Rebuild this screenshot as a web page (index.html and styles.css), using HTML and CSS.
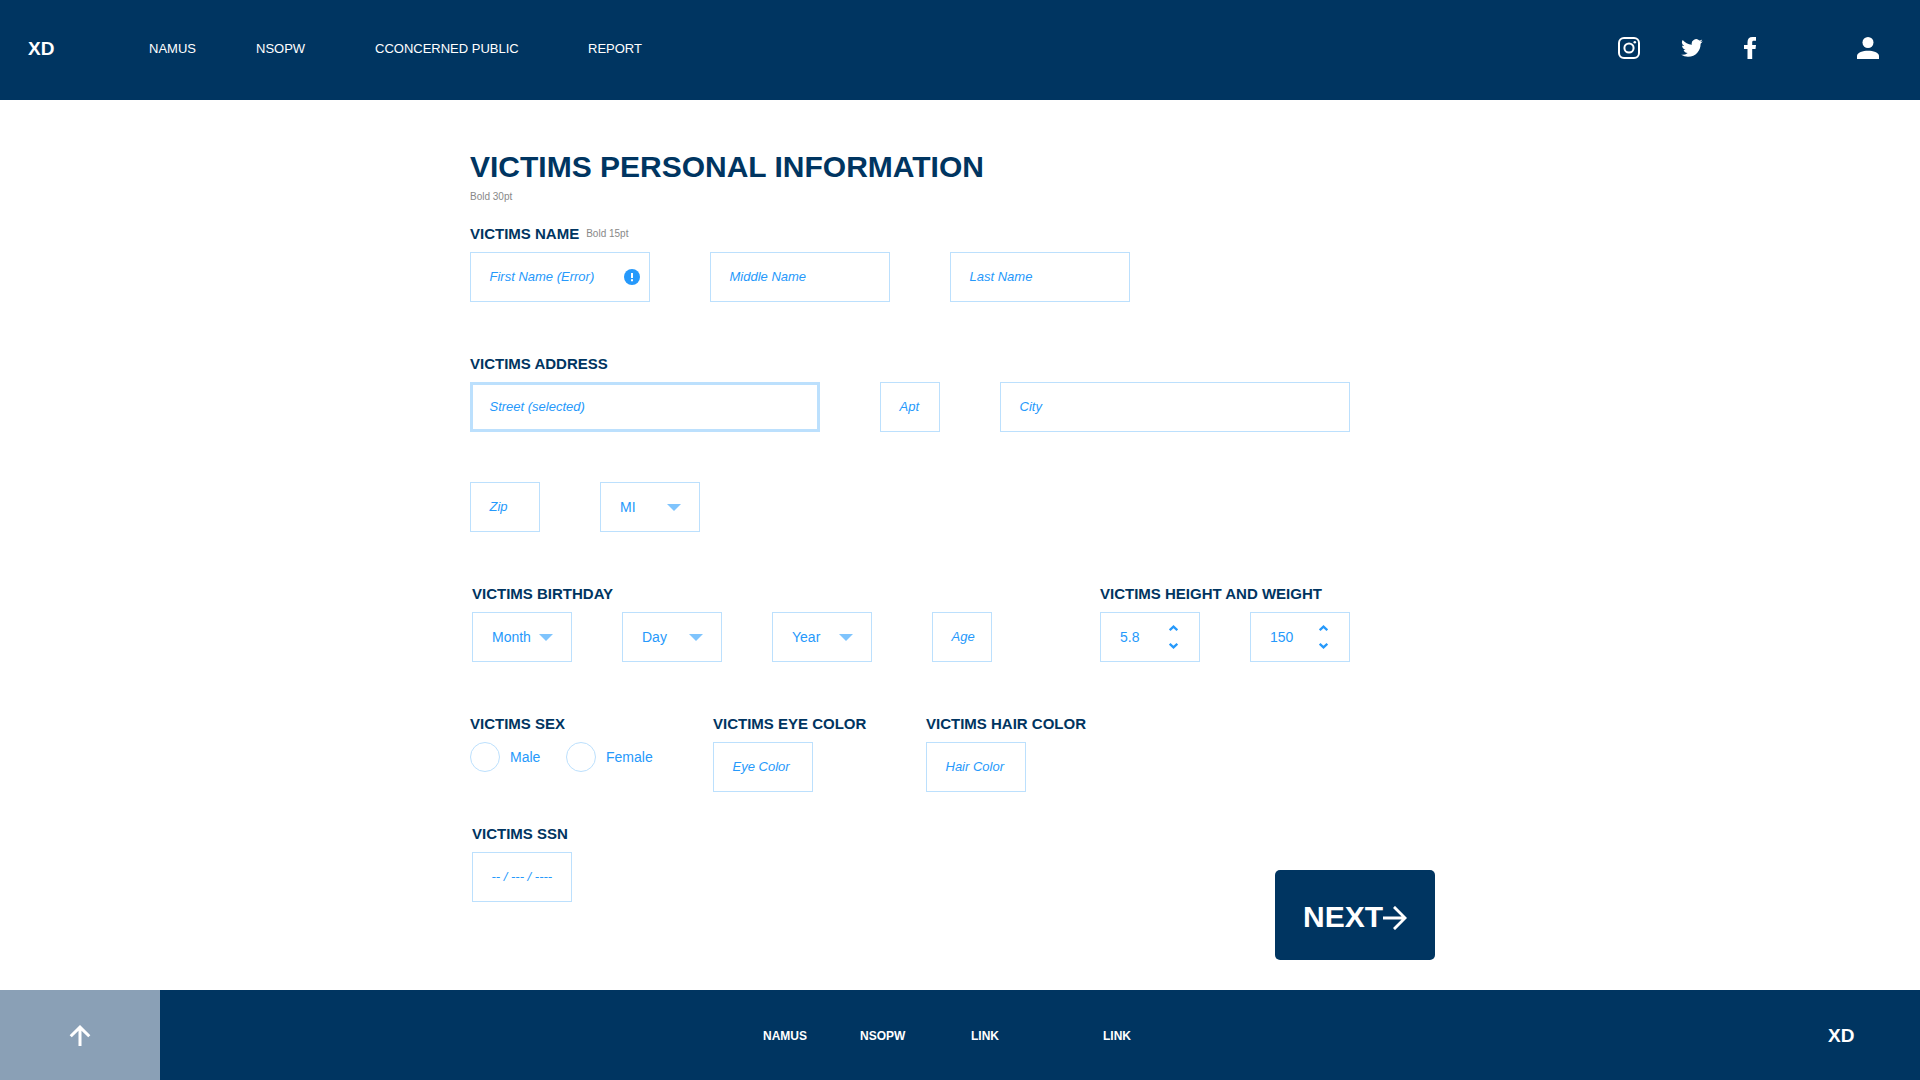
FILE: index.html
```html
<!DOCTYPE html>
<html lang="en">
<head>
<meta charset="utf-8">
<title>Victims Personal Information</title>
<link rel="stylesheet" href="styles.css">
</head>
<body>
<header class="header">
  <span class="logo">XD</span>
  <nav class="nav">
    <a class="nav-namus">NAMUS</a>
    <a class="nav-nsopw">NSOPW</a>
    <a class="nav-public">CCONCERNED PUBLIC</a>
    <a class="nav-report">REPORT</a>
  </nav>
  <div class="social">
    <svg class="instagram" viewBox="0 0 22 22" width="22" height="22" fill="none" stroke="#fff" stroke-width="2"><rect x="1" y="1" width="20" height="20" rx="5"/><circle cx="11" cy="11" r="4.6"/><circle cx="16.8" cy="5.2" r="1.3" fill="#fff" stroke="none"/></svg>
    <svg class="twitter" viewBox="0 2 24 20" width="22" height="18" fill="#fff"><path d="M23.95 4.57a10 10 0 0 1-2.82.77 4.96 4.96 0 0 0 2.16-2.72c-.95.55-2 .95-3.13 1.18a4.92 4.92 0 0 0-8.38 4.48C7.69 8.1 4.07 6.13 1.64 3.16a4.92 4.92 0 0 0 1.52 6.57 4.9 4.9 0 0 1-2.23-.61v.06c0 2.38 1.7 4.37 3.95 4.83a4.96 4.96 0 0 1-2.21.08 4.94 4.94 0 0 0 4.6 3.42A9.87 9.87 0 0 1 0 19.54a13.94 13.94 0 0 0 7.55 2.21c9.05 0 14-7.5 14-13.98 0-.21 0-.42-.02-.63a9.94 9.94 0 0 0 2.42-2.57z"/></svg>
    <svg class="facebook" viewBox="0 0 12 22" width="12" height="22" fill="#fff"><path d="M3.500 22V12H0V8h3.500V5.200C3.500 1.800 5.300 0 8.400 0H12v3.700H9.800C8.500 3.700 8.200 4.300 8.200 5.300V8H12l-.5 4H8.200v10z"/></svg>
    <svg class="person" viewBox="0 0 22 22" width="22" height="22" fill="#fff"><circle cx="11" cy="5.500" r="5.500"/><path d="M0 22v-3c0-3.500 6-5.300 11-5.300s11 1.800 11 5.300v3z"/></svg>
  </div>
</header>

<main class="form">
  <h1 class="title">VICTIMS PERSONAL INFORMATION</h1>
  <p class="note">Bold 30pt</p>

  <section class="group name">
    <h2 class="label">VICTIMS NAME <span class="note">Bold 15pt</span></h2>
    <div class="row">
      <div class="field w180"><span>First Name (Error)</span>
        <svg class="error" viewBox="0 0 16 16" width="16" height="16"><circle cx="8" cy="8" r="8" fill="#2699fb"/><path d="M7 4h2v5H7zM7 10.300h2v2H7z" fill="#fff"/></svg>
      </div>
      <div class="field w180"><span>Middle Name</span></div>
      <div class="field w180"><span>Last Name</span></div>
    </div>
  </section>

  <section class="group address">
    <h2 class="label">VICTIMS ADDRESS</h2>
    <div class="row">
      <div class="field w350 selected"><span>Street (selected)</span></div>
      <div class="field w60"><span>Apt</span></div>
      <div class="field w350"><span>City</span></div>
    </div>
    <div class="row second">
      <div class="field w70"><span>Zip</span></div>
      <div class="field w100 select">MI<i class="caret"></i></div>
    </div>
  </section>

  <div class="columns birth">
    <section class="group">
      <h2 class="label">VICTIMS BIRTHDAY</h2>
      <div class="row tight">
        <div class="field w100 select">Month<i class="caret"></i></div>
        <div class="field w100 select">Day<i class="caret"></i></div>
        <div class="field w100 select">Year<i class="caret"></i></div>
        <div class="field w60 age"><span>Age</span></div>
      </div>
    </section>
    <section class="group">
      <h2 class="label">VICTIMS HEIGHT AND WEIGHT</h2>
      <div class="row tight">
        <div class="field w100 select">5.8
          <svg class="stepper" viewBox="0 0 9 24" width="9" height="24"><path d="M.7 5.200 4.500 1.600l3.800 3.600M.7 18.800l3.800 3.600 3.800-3.600"/></svg>
        </div>
        <div class="field w100 select">150
          <svg class="stepper" viewBox="0 0 9 24" width="9" height="24"><path d="M.7 5.200 4.500 1.600l3.800 3.600M.7 18.800l3.800 3.600 3.800-3.600"/></svg>
        </div>
      </div>
    </section>
  </div>

  <div class="columns traits">
    <section class="group sex">
      <h2 class="label">VICTIMS SEX</h2>
      <div class="radios">
        <div class="radio"><i class="dot"></i>Male</div>
        <div class="radio"><i class="dot"></i>Female</div>
      </div>
    </section>
    <section class="group eye">
      <h2 class="label">VICTIMS EYE COLOR</h2>
      <div class="field w100"><span>Eye Color</span></div>
    </section>
    <section class="group">
      <h2 class="label">VICTIMS HAIR COLOR</h2>
      <div class="field w100"><span>Hair Color</span></div>
    </section>
  </div>

  <div class="columns last">
    <section class="group">
      <h2 class="label">VICTIMS SSN</h2>
      <div class="field w100"><span>-- / --- / ----</span></div>
    </section>
    <button class="next" type="button"><span>NEXT</span><svg viewBox="0 0 24 24" width="24" height="24" fill="none" stroke="#fff" stroke-width="2.800"><path d="M0 12h22M11 .9 22.100 12 11 23.100"/></svg></button>
  </div>
</main>

<footer class="footer">
  <a class="top"><svg viewBox="0 0 22 21" width="22" height="21" fill="none" stroke="#fff" stroke-width="3"><path d="M11 21V2M1.700 11.300 11 2.100l9.300 9.200"/></svg></a>
  <nav class="links">
    <a class="link-namus">NAMUS</a>
    <a class="link-nsopw">NSOPW</a>
    <a class="link-one">LINK</a>
    <a>LINK</a>
  </nav>
  <span class="logo">XD</span>
</footer>
</body>
</html>
```
FILE: styles.css
```css
* { box-sizing: border-box; }

body {
  margin: 0;
  height: 1080px;
  display: flex;
  flex-direction: column;
  overflow: hidden;
  background: #fff;
  color: #2699fb;
  font-family: "Liberation Sans", Arial, sans-serif;
}

h1, h2, p { margin: 0; }
svg { display: block; flex: none; }

.header {
  display: flex;
  align-items: center;
  height: 100px;
  padding: 0 41px 4px 28px;
  background: #003561;
  color: #fff;
}
.logo { padding-top: 2px; font-size: 19px; font-weight: bold; line-height: 24px; }
.header .logo { width: 121px; }
.nav { display: flex; padding-top: 2px; font-size: 13px; line-height: 20px; }
.nav-namus { width: 107px; }
.nav-nsopw { width: 119px; }
.nav-public { width: 213px; }
.social { display: flex; align-items: center; margin-left: auto; }
.twitter { margin-left: 41px; }
.facebook { margin-left: 41px; }
.person { margin-left: 101px; }

.form {
  flex: 1;
  padding: 47px 0 0 470px;
}
.title {
  font-size: 30px;
  line-height: 40px;
  color: #003561;
}
.note {
  font-size: 10px;
  font-weight: normal;
  line-height: 20px;
  color: #888;
}
p.note { height: 20px; margin-bottom: 17px; }
.label {
  display: flex;
  gap: 7px;
  height: 20px;
  margin-bottom: 8px;
  font-size: 15px;
  line-height: 20px;
  color: #003561;
  white-space: nowrap;
}
.name { margin-bottom: 52px; }
.row { display: flex; gap: 60px; }
.row.tight { gap: 50px; }
.row.second { margin-top: 50px; }
.columns { display: flex; }

.field {
  display: flex;
  align-items: center;
  justify-content: space-between;
  height: 50px;
  padding: 0 19px;
  border: 1px solid #bce0fd;
  font-size: 13px;
  font-style: italic;
  white-space: nowrap;
}
.field span { margin-left: -.5px; padding-bottom: 2px; }
.selected { border-width: 3px; padding: 0 17px; }
.select { font-size: 14px; font-style: normal; }
.w60 { width: 60px; }
.w70 { width: 70px; }
.w100 { width: 100px; }
.w180 { width: 180px; }
.w350 { width: 350px; }
.error { margin-right: -10px; }
.caret {
  margin-right: -1px;
  border: 7px solid transparent;
  border-top-color: #7fc4fd;
  border-bottom: 0;
}
.stepper {
  margin-right: 2px;
  fill: none;
  stroke: #2699fb;
  stroke-width: 2.300;
}

.birth { margin-top: 52px; padding-left: 2px; gap: 108px; }
.age { margin-left: 10px; }
.traits { margin-top: 52px; }
.sex { width: 243px; }
.eye { width: 213px; }
.radios { display: flex; font-size: 14px; }
.radio { display: flex; align-items: center; gap: 10px; width: 96px; }
.dot {
  width: 30px;
  height: 30px;
  border: 1px solid #bce0fd;
  border-radius: 50%;
}
.last { margin-top: 32px; padding-left: 2px; }
.next {
  display: flex;
  align-items: center;
  justify-content: center;
  width: 160px;
  height: 90px;
  margin: 46px 0 0 703px;
  padding: 6px 0 0;
  border: 0;
  border-radius: 5px;
  background: #003561;
  color: #fff;
  font: bold 30px "Liberation Sans", Arial, sans-serif;
}
.next span { padding-bottom: 3px; }

.footer {
  display: flex;
  align-items: center;
  height: 90px;
  flex: none;
  background: #003561;
  color: #fff;
}
.top {
  display: grid;
  place-items: center;
  width: 160px;
  height: 90px;
  background: #8aa0b6;
}
.links {
  display: flex;
  width: 1668px;
  padding: 2px 0 0 603px;
  font-size: 12px;
  font-weight: bold;
}
.link-namus { width: 97px; }
.link-nsopw { width: 111px; }
.link-one { width: 132px; }
```
